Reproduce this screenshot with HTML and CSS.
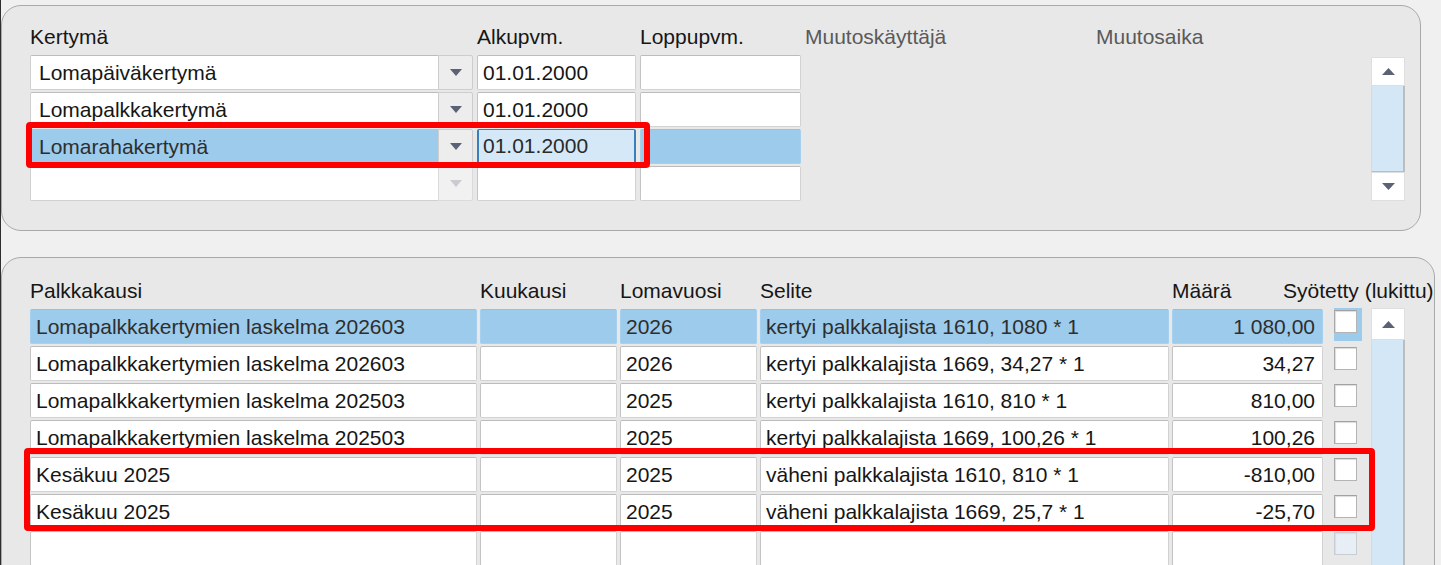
FILE: index.html
```html
<!DOCTYPE html>
<html lang="fi">
<head>
<meta charset="utf-8">
<title>Kertymät</title>
<link rel="stylesheet" href="styles.css">
</head>
<body>
<div class="page">
  <section class="panel panel-top">
    <div class="hdr top-cols">
      <div>Kertymä</div>
      <div>Alkupvm.</div>
      <div>Loppupvm.</div>
      <div class="dim">Muutoskäyttäjä</div>
      <div class="dim">Muutosaika</div>
    </div>
    <div class="rows top-cols">
      <div class="vscroll vscroll-top">
        <div class="sb-btn"><svg width="13" height="7" viewBox="0 0 13 7"><path d="M0 7L6.5 0L13 7z" fill="#5c6275"/></svg></div>
        <div class="sb-track"></div>
        <div class="sb-btn"><svg width="13" height="7" viewBox="0 0 13 7"><path d="M0 0h13L6.5 7z" fill="#5c6275"/></svg></div>
      </div>

      <div class="combo"><div class="cval">Lomapäiväkertymä</div><div class="cbtn"><svg width="12" height="7" viewBox="0 0 12 7"><path d="M0 0h12L6 7z" fill="#5c6275"/></svg></div></div>
      <div class="cell">01.01.2000</div>
      <div class="cell"></div>
      <div></div>
      <div></div>

      <div class="combo"><div class="cval">Lomapalkkakertymä</div><div class="cbtn"><svg width="12" height="7" viewBox="0 0 12 7"><path d="M0 0h12L6 7z" fill="#5c6275"/></svg></div></div>
      <div class="cell">01.01.2000</div>
      <div class="cell"></div>
      <div></div>
      <div></div>

      <div class="combo sel"><div class="cval">Lomarahakertymä</div><div class="cbtn"><svg width="12" height="7" viewBox="0 0 12 7"><path d="M0 0h12L6 7z" fill="#5c6275"/></svg></div></div>
      <div class="cell focus">01.01.2000</div>
      <div class="cell selcell"></div>
      <div></div>
      <div></div>

      <div class="combo"><div class="cval"></div><div class="cbtn off"><svg width="12" height="7" viewBox="0 0 12 7"><path d="M0 0h12L6 7z" fill="#c9cbd0"/></svg></div></div>
      <div class="cell"></div>
      <div class="cell"></div>
      <div></div>
      <div></div>
    </div>
  </section>

  <section class="panel panel-bottom">
    <div class="hdr bot-cols">
      <div>Palkkakausi</div>
      <div>Kuukausi</div>
      <div>Lomavuosi</div>
      <div>Selite</div>
      <div class="h-maara">Määrä</div>
      <div class="h-syot">Syötetty (lukittu)</div>
    </div>
    <div class="rows bot-cols">
      <div class="vscroll vscroll-bot">
        <div class="sb-btn sb-up"><svg width="13" height="7" viewBox="0 0 13 7"><path d="M0 7L6.5 0L13 7z" fill="#5c6275"/></svg></div>
        <div class="sb-track"></div>
      </div>

      <div class="cell selcell">Lomapalkkakertymien laskelma 202603</div>
      <div class="cell selcell"></div>
      <div class="cell selcell">2026</div>
      <div class="cell selcell">kertyi palkkalajista 1610, 1080 * 1</div>
      <div class="cell selcell num">1 080,00</div>
      <div class="chk"><div class="chk-sel"><span class="box"></span></div></div>

      <div class="cell">Lomapalkkakertymien laskelma 202603</div>
      <div class="cell"></div>
      <div class="cell">2026</div>
      <div class="cell">kertyi palkkalajista 1669, 34,27 * 1</div>
      <div class="cell num">34,27</div>
      <div class="chk"><span class="box"></span></div>

      <div class="cell">Lomapalkkakertymien laskelma 202503</div>
      <div class="cell"></div>
      <div class="cell">2025</div>
      <div class="cell">kertyi palkkalajista 1610, 810 * 1</div>
      <div class="cell num">810,00</div>
      <div class="chk"><span class="box"></span></div>

      <div class="cell">Lomapalkkakertymien laskelma 202503</div>
      <div class="cell"></div>
      <div class="cell">2025</div>
      <div class="cell">kertyi palkkalajista 1669, 100,26 * 1</div>
      <div class="cell num">100,26</div>
      <div class="chk"><span class="box"></span></div>

      <div class="cell">Kesäkuu 2025</div>
      <div class="cell"></div>
      <div class="cell">2025</div>
      <div class="cell">väheni palkkalajista 1610, 810 * 1</div>
      <div class="cell num">-810,00</div>
      <div class="chk"><span class="box"></span></div>

      <div class="cell">Kesäkuu 2025</div>
      <div class="cell"></div>
      <div class="cell">2025</div>
      <div class="cell">väheni palkkalajista 1669, 25,7 * 1</div>
      <div class="cell num">-25,70</div>
      <div class="chk"><span class="box"></span></div>

      <div class="cell"></div>
      <div class="cell"></div>
      <div class="cell"></div>
      <div class="cell"></div>
      <div class="cell"></div>
      <div class="chk"><span class="box box-off"></span></div>

      <div class="cell"></div>
      <div class="cell"></div>
      <div class="cell"></div>
      <div class="cell"></div>
      <div class="cell"></div>
      <div class="chk"><span class="box box-off"></span></div>
    </div>
  </section>

  <div class="mark mark-1"></div>
  <div class="mark mark-2"></div>
</div>
</body>
</html>
```

FILE: styles.css
```css
html, body {
  margin: 0;
  padding: 0;
}

body {
  background: #f0f0f0;
  font-family: "Liberation Sans", Arial, sans-serif;
  font-size: 21px;
  color: #161616;
  overflow: hidden;
}

.page {
  position: relative;
  height: 565px;
  box-sizing: border-box;
  border-left: 1px solid #2e2e2e;
  padding-top: 5px;
  overflow: hidden;
}

.panel {
  box-sizing: border-box;
  background: #e8e8e8;
  border: 1px solid #a9a9a9;
  border-radius: 20px;
  padding-left: 28px;
}

.panel-top {
  width: 1420px;
  height: 226px;
  padding-top: 19px;
  margin-bottom: 26px;
}

.panel-bottom {
  width: 1434px;
  height: 340px;
  padding-top: 21px;
}

.hdr {
  display: grid;
  height: 24px;
  line-height: 24px;
  margin-bottom: 6px;
  white-space: nowrap;
}

.dim {
  color: #5a5a5a;
}

.top-cols {
  grid-template-columns: 443px 159px 161px 287px 271px 34px;
  column-gap: 4px;
}

.bot-cols {
  grid-template-columns: 447px 137px 137px 409px 151px 42px 34px;
  column-gap: 3px;
}

.h-maara {
  grid-row: 1;
  grid-column: 5;
  padding-left: 0;
}

.h-syot {
  grid-row: 1;
  grid-column: 5 / 8;
  margin-left: 111px;
}

.rows {
  display: grid;
  grid-auto-rows: 35px;
  row-gap: 2px;
}

.cell {
  box-sizing: border-box;
  background: #fff;
  border: 1px solid #d2d2d2;
  border-top-color: #bcbcbc;
  border-left-color: #c4c4c4;
  border-radius: 2px;
  padding: 0 5px;
  line-height: 33px;
  white-space: nowrap;
  overflow: hidden;
}

.cell.num {
  text-align: right;
  padding-right: 7px;
}

.selcell {
  background: #9ccbeb;
  border-color: #a6d0ee;
  border-top-color: #93c3e4;
  color: #2e2e2e;
}

.focus {
  background: #d4e8f8;
  border: 2px solid #3a7fbd;
  border-top-width: 1px;
  line-height: 32px;
  padding-left: 4px;
  color: #2a2a2a;
}

/* combo box */
.combo {
  display: flex;
}

.cval {
  flex: 1;
  box-sizing: border-box;
  background: #fff;
  border: 1px solid #d0d0d0;
  border-top-color: #bdbdbd;
  border-right: none;
  border-radius: 2px 0 0 2px;
  padding: 0 8px;
  line-height: 33px;
  white-space: nowrap;
  overflow: hidden;
}

.combo.sel .cval {
  background: #9ccbeb;
  border-color: #9ccbeb;
  color: #2e2e2e;
}

.cbtn {
  width: 35px;
  box-sizing: border-box;
  background: #ededed;
  border: 1px solid #cdcdcd;
  border-radius: 0 2px 2px 0;
  display: flex;
  align-items: center;
  justify-content: center;
}

.cbtn.off {
  background: #f1f1f1;
  border-color: #dadada;
}

/* scrollbars */
.vscroll {
  display: flex;
  flex-direction: column;
}

.vscroll-top {
  grid-column: 6;
  grid-row: 1 / span 4;
  padding-top: 2px;
}

.vscroll-bot {
  grid-column: 7;
  grid-row: 1 / span 8;
  margin-top: -1px;
}

.sb-btn {
  flex: 0 0 29px;
  box-sizing: border-box;
  background: #fff;
  border: 1px solid #dedede;
  display: flex;
  align-items: center;
  justify-content: center;
}

.sb-up {
  flex-basis: 32px;
}

.sb-track {
  flex: 1;
  background: #d4e7f7;
  border-left: 1px solid #d0dbe5;
  border-right: 2px solid #bdbdbd;
}

.vscroll-top .sb-track {
  border-bottom: 1px solid #bdbdbd;
}

/* checkboxes */
.chk {
  padding-left: 8px;
  padding-top: 1px;
}

.chk-sel {
  width: 28px;
  height: 33px;
  margin-top: -2px;
  padding-top: 2px;
  box-sizing: border-box;
  background: #9ccbeb;
}

.box {
  display: block;
  width: 23px;
  height: 23px;
  box-sizing: border-box;
  background: #fff;
  border: 1px solid #b4b4b4;
  border-top-color: #a2a2a2;
  border-left-color: #a8a8a8;
  box-shadow: inset 1px 1px 1px #dcdcdc;
}

.box-off {
  background: #e8eef5;
  border-color: #c8cdd3;
}

/* annotation highlights */
.mark {
  position: absolute;
  box-sizing: border-box;
  border: 6px solid #ff0000;
  border-radius: 4px;
  pointer-events: none;
}

.mark-1 {
  left: 25px;
  top: 122px;
  width: 624px;
  height: 46px;
}

.mark-2 {
  left: 23px;
  top: 448px;
  width: 1351px;
  height: 83px;
}
```
